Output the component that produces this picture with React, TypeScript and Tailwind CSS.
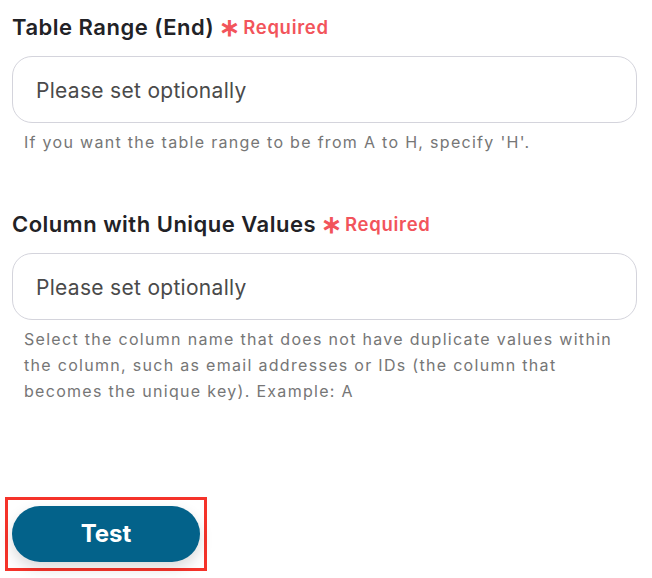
import React from "react";

function Label({ text }: { text: string }) {
  return (
    <div className="flex items-center gap-[5px] pl-3 h-[30px]">
      <span className="text-[22px] leading-[30px] font-semibold text-[#222226] tracking-[0.5px]">{text}</span>
      <span className="flex items-center gap-[3px] text-[#f2545b] font-semibold">
        <span className="text-[25px] leading-none mt-[1px]">∗</span>
        <span className="text-[18.5px] leading-[30px] tracking-[0.7px]">Required</span>
      </span>
    </div>
  );
}

function Input() {
  return (
    <div className="ml-3 mr-[15px] h-[67px] rounded-[20px] border border-[#d4d4dc] bg-white flex items-center pl-[23px]">
      <span className="text-[21px] tracking-[0.3px] text-[#4a4a4a] mt-[2px]">Please set optionally</span>
    </div>
  );
}

export default function App() {
  return (
    <div
      className="w-[652px] h-[578px] bg-white relative overflow-hidden"
      style={{ fontFamily: "Inter, 'Noto Sans', sans-serif" }}
    >
      <div className="pt-[12px]">
        <Label text="Table Range (End)" />
        <div className="mt-[14px]">
          <Input />
        </div>
        <p className="mt-[6px] pl-6 text-[16px] leading-[26px] text-[#767676] tracking-[1.3px]">
          If you want the table range to be from A to H, specify 'H'.
        </p>
        <div className="mt-[54px]">
          <Label text="Column with Unique Values" />
        </div>
        <div className="mt-[14px]">
          <Input />
        </div>
        <p className="mt-[6px] pl-6 pr-5 text-[16px] leading-[26px] text-[#767676] tracking-[1.3px]">
          Select the column name that does not have duplicate values within the column, such as email addresses or IDs (the column that becomes the unique key). Example: A
        </p>
      </div>
      <div className="absolute left-[5px] top-[497px] w-[202px] h-[74px] border-[3px] border-[#f5332a] flex items-center justify-center">
        <div className="w-[188px] h-[56px] rounded-full bg-[#03628a] shadow-[0_6px_14px_rgba(0,0,0,0.15)] flex items-center justify-center">
          <span className="text-white font-bold text-[24px]">Test</span>
        </div>
      </div>
    </div>
  );
}
